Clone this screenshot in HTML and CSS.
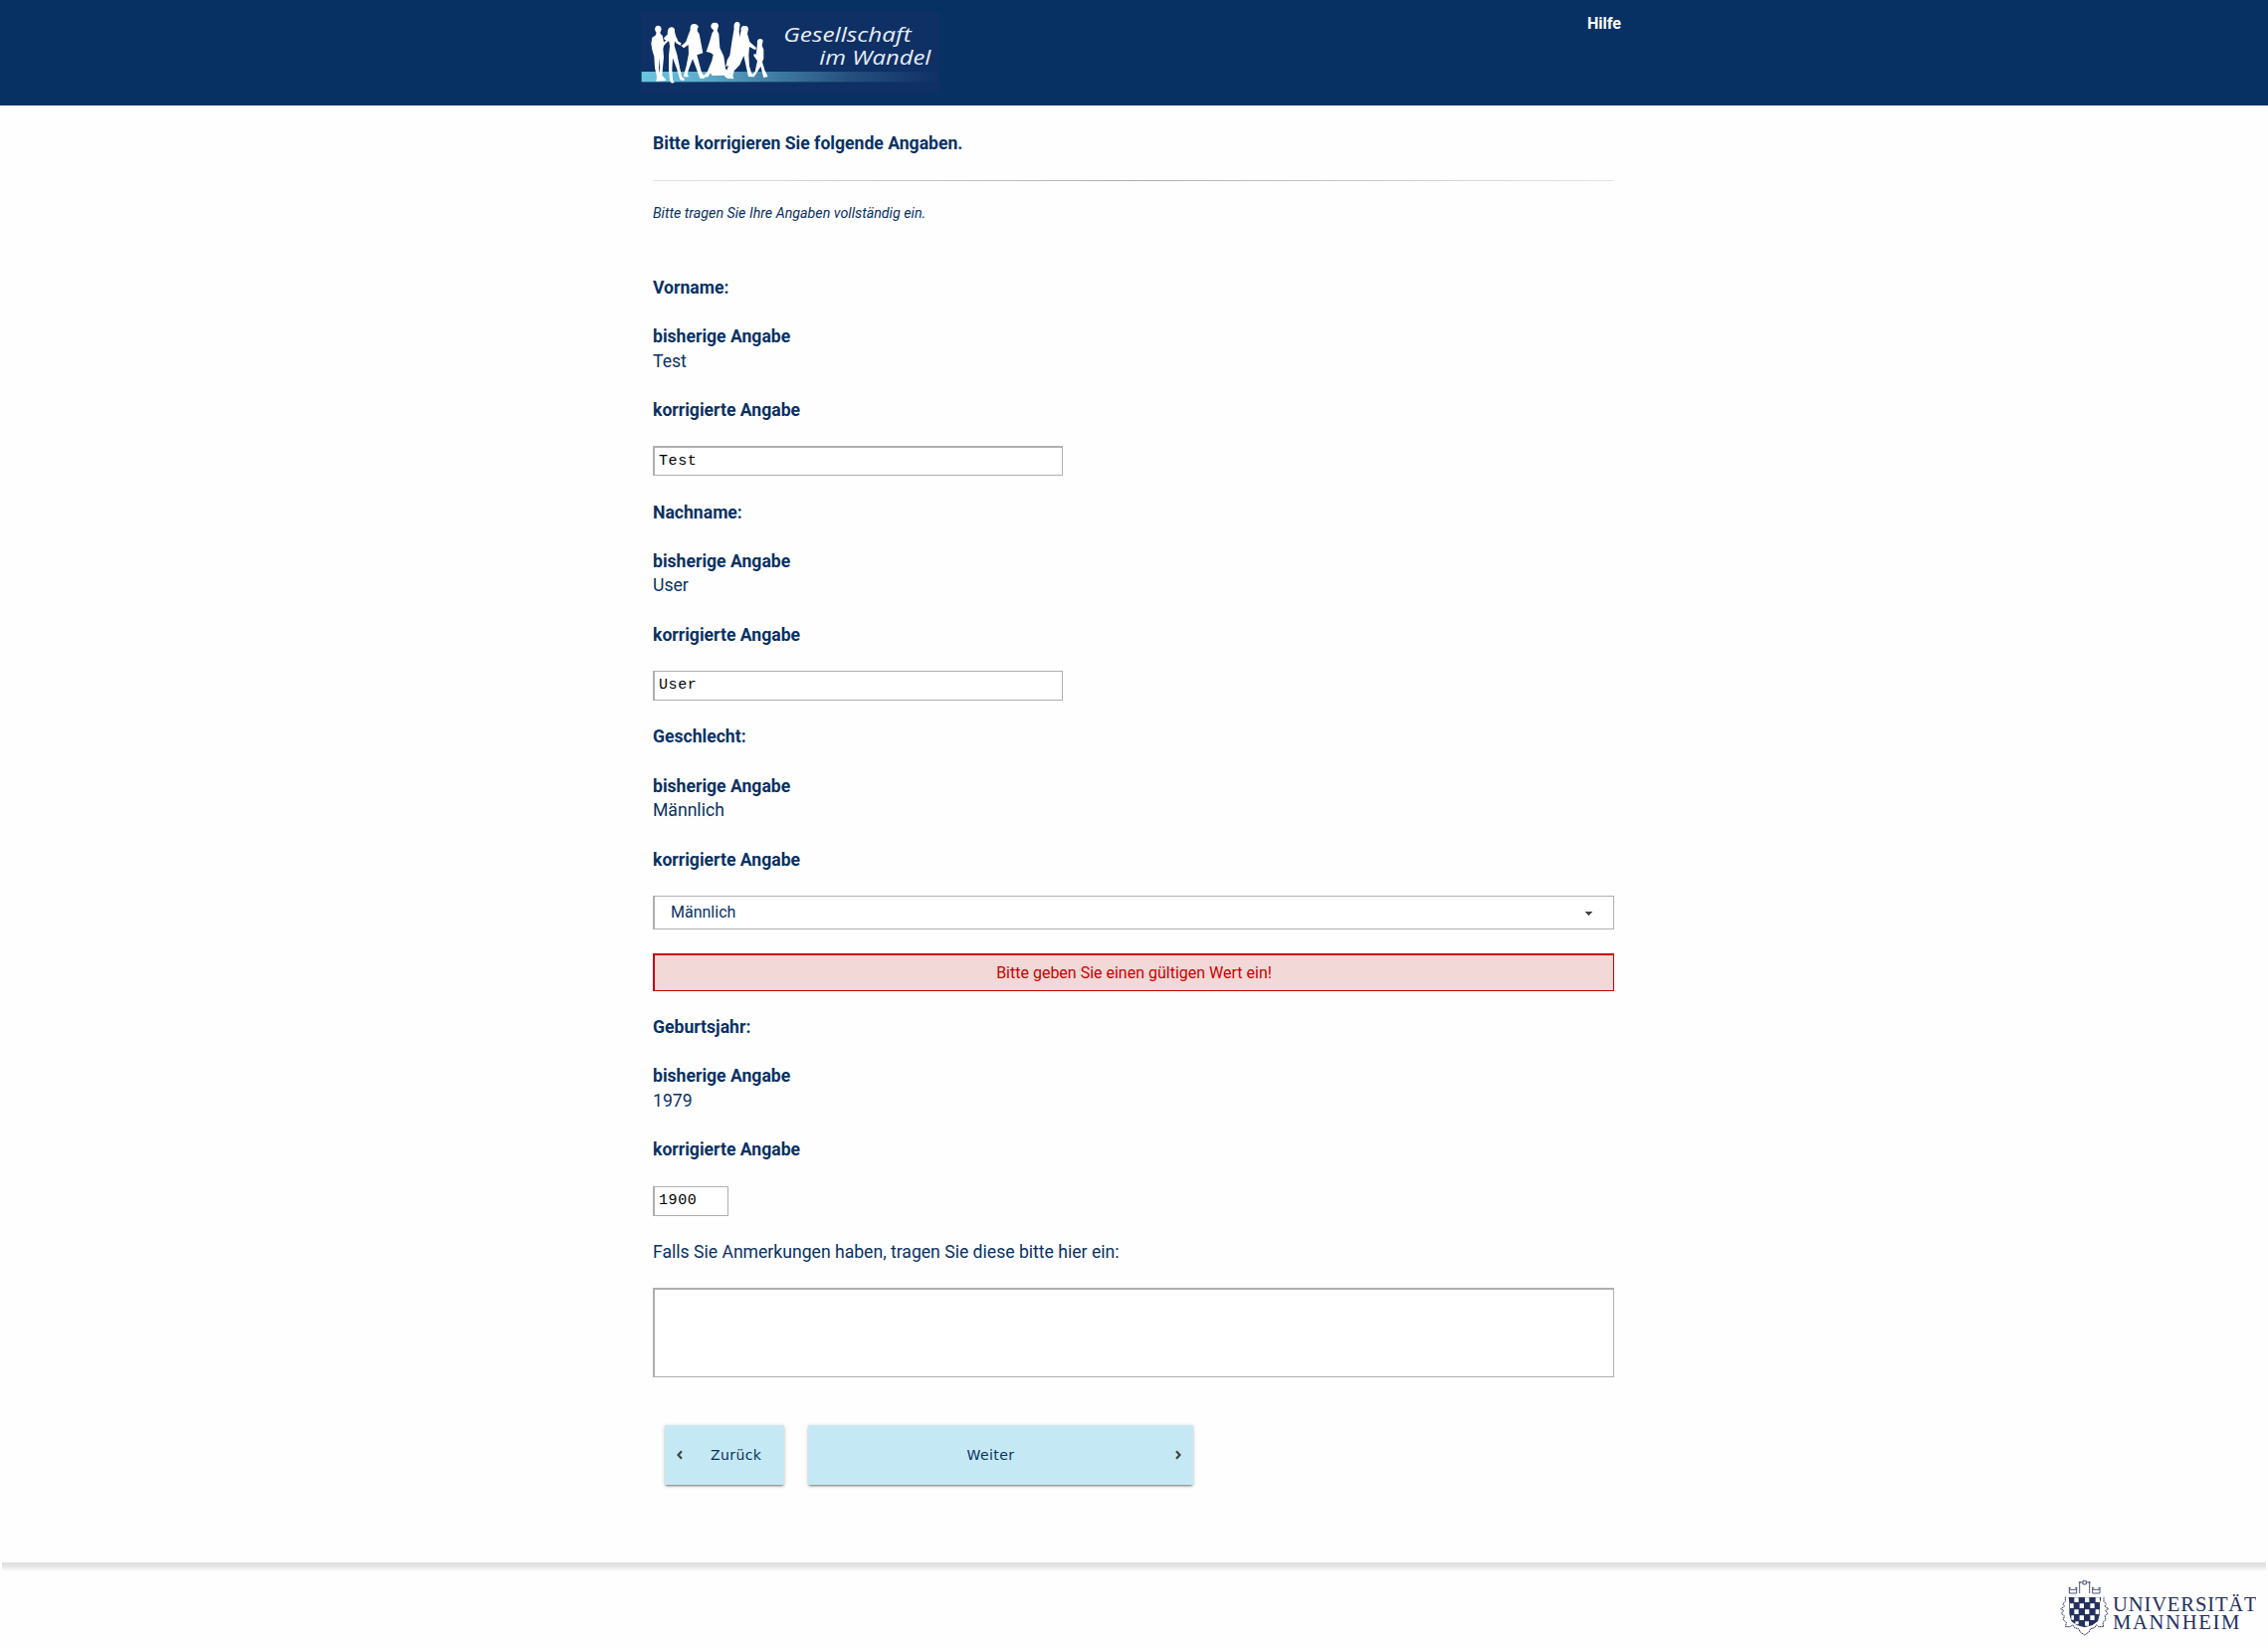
FILE: index.html
```html
<!DOCTYPE html>
<html lang="de">
<head>
<meta charset="utf-8">
<title>Gesellschaft im Wandel</title>
<link rel="stylesheet" href="styles.css">
</head>
<body>
<header class="site-header">
  <div class="header-inner">
    <svg class="logo" viewBox="42 0 900 318" role="img" aria-label="Gesellschaft im Wandel">
      <defs>
        <linearGradient id="ground" x1="0" x2="1" y1="0" y2="0">
          <stop offset="0" stop-color="#6cc5e0"/>
          <stop offset=".2" stop-color="#5eaccb"/>
          <stop offset=".43" stop-color="#427fa6"/>
          <stop offset=".7" stop-color="#254f7d"/>
          <stop offset="1" stop-color="#103066"/>
        </linearGradient>
      </defs>
      <rect x="42" y="36" width="900" height="246" fill="#0e3065"/>
      <rect x="44" y="216" width="898" height="31" fill="url(#ground)"/>
      <g fill="#fff" transform="translate(60 54)">
        <ellipse cx="34" cy="34" rx="9.500" ry="11"/>
        <path d="M29 42h11l1 6 6 5 4 20 10-8 4 4-14 15-2 10 2 24-3 32-2 24 12 12-2 3-28 2 2-14-6-26-2-34-6-20-3-20 3-18 11-7zM37 120l-1 30 1 20 2-20z" fill-rule="evenodd"/>
        <path d="M63 50c-2-8 1-22 11-22 9 0 11 8 10 14l3 12 8 17 9 5-3 7-13-7-4-6-1 14 8 26 7 34 7 32 9 9-3 4-11-2-10-34-12-32-2 36 2 28 5 10-8 2-6-8-3-36 0-38 3-30-2-14-14-6-2-4 12-12z"/>
        <path d="M131 36c-1-12 3-18 11-18 8 0 11 3 12 7l3 3-4 1-1 11 6 8 5 26 6 32-14 4-4 2 6 22 8 30 10 14-3 5-12-1-14-38-8-20-10 26-6 18 4 10-14 0-1-5 8-28 7-38-1-26-14 10-8-8 5-2 10-10 6-17z"/>
      </g>
      <g fill="#fff" transform="translate(222 54)">
        <path d="M32 30c-3-10 2-16 11-16 9 0 13 7 10 14l-3 10 5 10 3 42 12 26 5 36 13 19-3 5-14-3-36 1-5-8-8 12-12 1-2-4 12-12 14-34 4-18-8-6-13-3 10-30 8-28 5-6z"/>
        <path d="M101 32c-2-12 2-20 9-20 8 0 10 7 8 13l-2 16 3 20 0 44-6 26-17 20-10 22 4 9-7 2-11-8 12-32-8 3 4-20 8-14 7-46z"/>
        <path d="M122 38c-2-10 4-15 11-14 10 0 13 7 10 14l-2 10 7 24 20 18-3 7-18-10-2 26 2 32 6 21 9 8-3 4-15-1-8-36-6-27-12 28-17 18-4 15 3 8-8 1-6-8 8-28 18-28 2-44z"/>
        <path d="M171 76c-2-8 3-13 9-13 7 0 9 5 7 11l-2 9 5 12 0 28-4 10 8 26 9 18-13 3-9-34-7 12-13 20-9-3 12-13 7-32-4-6-7-10 1-6 6 2 3-22z"/>
      </g>
      <text class="logo-text" x="472" y="126" textLength="385" lengthAdjust="spacingAndGlyphs">Gesellschaft</text>
      <text class="logo-text" x="580" y="195" textLength="336" lengthAdjust="spacingAndGlyphs">im Wandel</text>
    </svg>
    <a class="help-link">Hilfe</a>
  </div>
</header>

<main class="page">
  <h1 class="title">Bitte korrigieren Sie folgende Angaben.</h1>
  <hr class="rule">
  <p class="hint">Bitte tragen Sie Ihre Angaben vollständig ein.</p>

  <form class="form">
    <section class="question">
      <h2 class="name">Vorname:</h2>
      <h3 class="label">bisherige Angabe</h3>
      <p class="value">Test</p>
      <h3 class="label">korrigierte Angabe</h3>
      <input class="control control-deep" type="text" value="Test">
    </section>
    <section class="question">
      <h2 class="name">Nachname:</h2>
      <h3 class="label">bisherige Angabe</h3>
      <p class="value">User</p>
      <h3 class="label">korrigierte Angabe</h3>
      <input class="control" type="text" value="User">
    </section>
    <section class="question question-late">
      <h2 class="name">Geschlecht:</h2>
      <h3 class="label">bisherige Angabe</h3>
      <p class="value">Männlich</p>
      <h3 class="label">korrigierte Angabe</h3>
      <div class="control select"><span>Männlich</span><svg class="caret" viewBox="0 0 7 4"><path d="M0 0h7v1h-1v1h-1v1h-1v1h-1v-1h-1v-1h-1v-1h-1z"/></svg></div>
    </section>
    <p class="error">Bitte geben Sie einen gültigen Wert ein!</p>
    <section class="question question-year">
      <h2 class="name">Geburtsjahr:</h2>
      <h3 class="label">bisherige Angabe</h3>
      <p class="value">1979</p>
      <h3 class="label">korrigierte Angabe</h3>
      <input class="control control-year" type="text" value="1900">
    </section>
    <p class="remark">Falls Sie Anmerkungen haben, tragen Sie diese bitte hier ein:</p>
    <textarea class="control textarea"></textarea>

    <div class="actions">
      <button class="btn btn-back" type="button"><svg class="chevron" viewBox="0 0 6 10"><path d="M5 1.200 1.500 5 5 8.800"/></svg><span>Zurück</span></button>
      <button class="btn btn-next" type="button"><span>Weiter</span><svg class="chevron" viewBox="0 0 6 10"><path d="M1 1.200 4.500 5 1 8.800"/></svg></button>
    </div>
  </form>
</main>

<footer class="site-footer">
  <svg class="uni" viewBox="0 0 615 204" role="img" aria-label="Universität Mannheim">
    <g fill="none" stroke="#2b355f" stroke-width="2.500">
      <path d="M52 41v16h22V41M50 41h7M69 41h7M52 46h22M122 41v16h22V41M120 41h7M139 41h7M122 46h22M83 57V24h10M113 57V24h-10M80 24h6M110 24h6M93 20h10v10H93z"/>
      <path stroke-width="3" stroke-dasharray="5 1.500" d="M40 68v14l-8 8 6 6-12 8 9 5-7 9 9 7-3 12 9 8-2 13h15l6-6 6 9 12 3 5 10 13 9 13-9 5-10 12-3 6-9 6 6h15l-2-13 9-8-3-12 9-7-7-9 9-5-12-8 6-6-8-8V68"/>
    </g>
    <path fill="#25305f" d="M50 69h97v8l-3 8v34l-6 22-16 12-24 7-24-7-16-12-6-22V85z"/>
    <path fill="#fff" d="M67 70h13v14H67zM99 70h13v14H99zM131 70h13v14h-13zM54 88h11v14H54zM83 88h13v14H83zM115 88h13v14h-13zM67 106h13v14H67zM99 106h13v14H99zM131 106h11v14h-11zM58 124h8v13h-8zM83 124h13v14H83zM115 124h13v14h-13zM70 142h10v9H70zM99 142h12v13H99z"/>
    <text class="uni-text" x="183" y="111" textLength="434">UNIVERSITÄT</text>
    <text class="uni-text" x="183" y="165" textLength="382">MANNHEIM</text>
  </svg>
</footer>
</body>
</html>
```
FILE: styles.css
```css
* { box-sizing: border-box; }

body {
  margin: 0;
  min-height: 1656px;
  background: #fefefe;
  color: #083163;
  font-family: Roboto, sans-serif;
  font-size: 17.6px;
  line-height: 24.5px;
  overflow: hidden;
}

h1, h2, h3, p { margin: 0; font-size: inherit; }

.site-header { height: 106px; background: #083163; }

.header-inner {
  display: flex;
  justify-content: space-between;
  align-items: flex-start;
  width: 986px;
  margin-left: 644px;
}

.logo { display: block; width: 300px; height: 106px; }

.logo-text {
  fill: #e8edf4;
  font: italic 400 60px "Open Sans", "Noto Sans", sans-serif;
}

.help-link {
  padding-top: 12px;
  margin-right: 1px;
  color: #fff;
  font-size: 16px;
  font-weight: 700;
  line-height: 24px;
}

.page { width: 966px; height: 1464px; margin-left: 656px; padding-top: 26px; }

.title { height: 49px; font-weight: 700; }

.rule {
  height: 1px;
  margin: 0;
  border: 0;
  background: linear-gradient(to right, #e3e3e3, #afafaf 50%, #e6e6e6);
}

.hint { margin-top: 20px; font-size: 14.25px; font-style: italic; }

.form { padding-top: 50.500px; }

.question { height: 225.700px; }
.question-late { height: 229.600px; }
.question-year { height: 225.800px; }

.name, .label { font-weight: 700; }
.name { margin-bottom: 24.800px; }
.value { margin-bottom: 24.900px; }

.control {
  display: block;
  width: 412px;
  height: 30px;
  margin-top: 23.600px;
  padding: 0 4px;
  border: solid #afafaf;
  border-width: 1px 1px 1px 2px;
  border-radius: 0;
  outline: 0;
  background: #fff;
  color: #000;
  font: 15px/24px "Liberation Mono", monospace;
  letter-spacing: .6px;
}

.control-deep { border-top-width: 2px; }
.control-year { width: 76px; margin-top: 24px; }

.select {
  display: flex;
  justify-content: space-between;
  align-items: center;
  width: 966px;
  height: 34px;
  padding: 0 21px 0 16px;
  color: #083163;
  font-family: Roboto, sans-serif;
  font-size: 16px;
  letter-spacing: 0;
}

.caret { width: 7px; height: 4px; margin-top: 2px; fill: #444; }

.error {
  height: 38px;
  margin-bottom: 24.2px;
  border: solid #c90000;
  border-width: 2px 1px 1px 2px;
  background: #f3d8d8;
  color: #c90000;
  font-size: 16px;
  line-height: 35px;
  text-align: center;
}

.textarea { width: 966px; height: 90px; border-top-width: 2px; resize: none; }

.actions { display: flex; gap: 24px; padding: 48px 0 0 12px; }

.btn {
  display: flex;
  align-items: center;
  height: 60px;
  padding: 0 12px;
  border: 0;
  border-radius: 1px;
  background: #c5e9f4;
  box-shadow: 0 2px 2px -1px rgba(0, 0, 0, .45), 0 1px 4px rgba(0, 0, 0, .2);
  color: #083163;
  font: 14px/20px "DejaVu Sans", sans-serif;
  letter-spacing: .4px;
}

.btn-back { width: 120px; }
.btn-back span { margin-left: 28px; }
.btn-next { width: 387px; }
.btn-next span { flex: 1; text-align: center; padding-right: 14px; }

.chevron { width: 6px; height: 10px; fill: none; stroke: #444; stroke-width: 2.2; }

.site-footer {
  display: flex;
  justify-content: flex-end;
  align-items: flex-start;
  height: 86px;
  padding: 12px 12.5px 0 0;
  background: linear-gradient(#dedede, #e5e5e5 4px, #fefefe 9px) 2px 0 / calc(100% - 4px) 9px no-repeat;
}

.uni { width: 205px; height: 68px; }

.uni-text { fill: #25305f; font: 62px "Liberation Serif", serif; }
```
